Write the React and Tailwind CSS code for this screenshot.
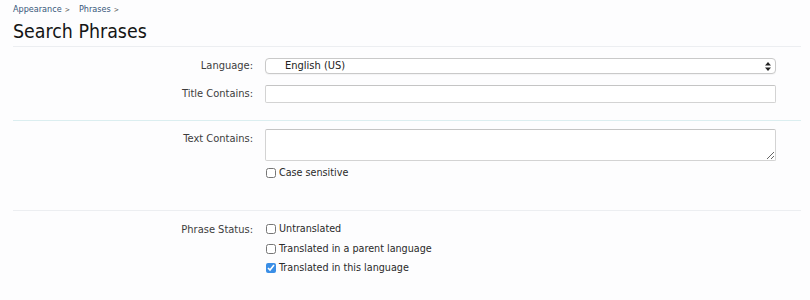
import React from 'react';

const font = { fontFamily: '"DejaVu Sans Condensed", "DejaVu Sans", Tahoma, sans-serif' };

const Row = ({ label, children, labelClass = 'pt-0' }) => (
  <div className="flex">
    <div className={`w-[240px] shrink-0 text-right text-[11px] text-[#3c3c3c] ${labelClass}`}>{label}</div>
    <div className="ml-[12px] flex-1">{children}</div>
  </div>
);

const Check = ({ label, checked }) => (
  <label className="flex items-center h-[19.5px] text-[10.7px] text-[#2a2a2a]">
    <input
      type="checkbox"
      defaultChecked={checked}
      className="w-[10px] h-[10px] m-0 ml-[1px] mr-[3px] accent-[#3a8ee6]"
    />
    <span>{label}</span>
  </label>
);

export default function App() {
  return (
    <div className="w-[810px] h-[300px] bg-[#fdfdfe] pl-[13px] pr-[9px] overflow-hidden" style={font}>
      {/* breadcrumb */}
      <div className="flex items-center pt-[4px] text-[9px] text-[#37577a] h-[16px]">
        <span>Appearance</span>
        <span className="ml-[3px] text-[7px] text-[#555]">&gt;</span>
        <span className="ml-[9px]">Phrases</span>
        <span className="ml-[3px] text-[7px] text-[#555]">&gt;</span>
      </div>
      <h1 className="text-[19.4px] leading-[26px] text-[#151515] mt-[3px]">Search Phrases</h1>

      <div className="mt-[1px] border-t border-[#eceef1]" />

      {/* section 1 */}
      <div className="pt-[11px] pb-[17px] pr-[25px]">
        <Row label="Language:" labelClass="leading-[16px]">
          <div className="relative h-[16px] rounded-[4px] border border-[#c9c9c9] bg-white flex items-center pl-[19px] text-[11px] text-[#222] shadow-[0_1px_1px_rgba(0,0,0,0.04)]">
            English (US)
            <svg className="absolute right-[4px] top-[3px]" width="6" height="9" viewBox="0 0 6 9">
              <path d="M3 0 L6 3.6 H0 Z" fill="#222" />
              <path d="M3 9 L6 5.4 H0 Z" fill="#222" />
            </svg>
          </div>
        </Row>
        <div className="h-[11px]" />
        <Row label="Title Contains:" labelClass="leading-[18px]">
          <div className="h-[18px] rounded-[2px] border border-[#d3d3d3] border-t-[#c4c4c4] bg-white" />
        </Row>
      </div>

      <div className="border-t border-[#dbeef0]" />

      {/* section 2 */}
      <div className="pt-[8px] pb-[27px] pr-[25px]">
        <Row label="Text Contains:" labelClass="pt-[3px] leading-[13px]">
          <textarea className="block w-full h-[32px] rounded-[2px] border border-[#d3d3d3] border-t-[#c4c4c4] bg-white resize-y outline-none" />
          <div className="mt-[2px]">
            <Check label="Case sensitive" />
          </div>
        </Row>
      </div>

      <div className="border-t border-[#eceef1]" />

      {/* section 3 */}
      <div className="pt-[9px] pr-[25px]">
        <Row label="Phrase Status:" labelClass="leading-[19.5px]">
          <Check label="Untranslated" />
          <Check label="Translated in a parent language" />
          <Check label="Translated in this language" checked />
        </Row>
      </div>
    </div>
  );
}
